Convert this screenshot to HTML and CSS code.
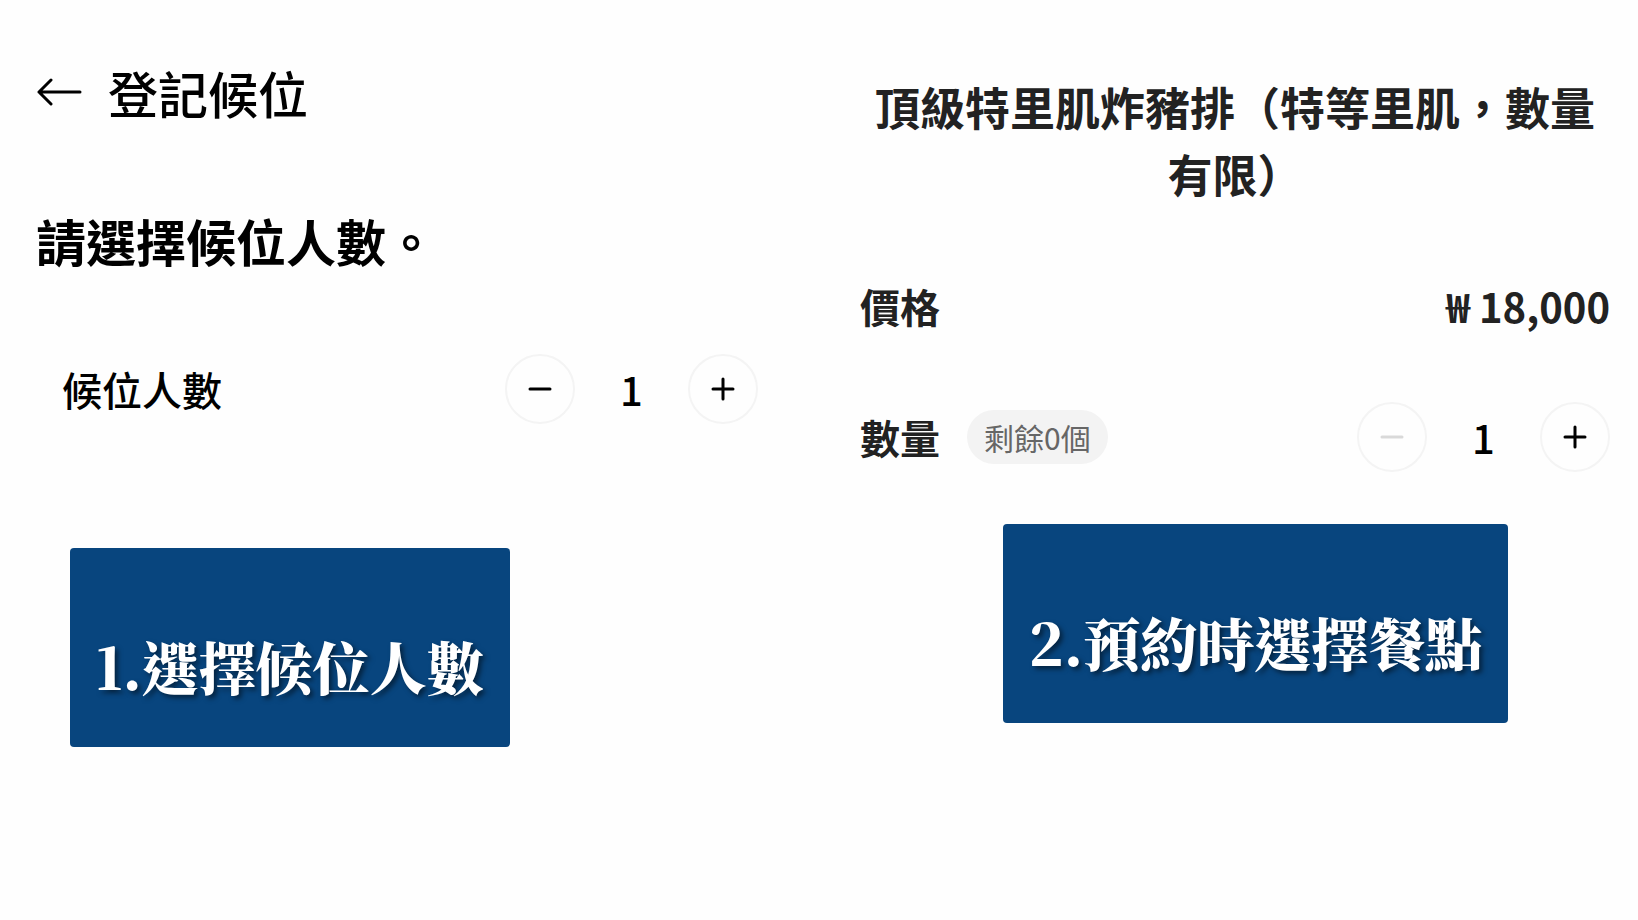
FILE: index.html
```
<!DOCTYPE html>
<html lang="zh-Hant">
<head>
    <meta charset="UTF-8">
    <meta name="viewport" content="width=device-width, initial-scale=1">
    <title>登記候位</title>
    <link rel="stylesheet" href="styles.css">
</head>
<body>
    <main class="page">
        <section class="panel waiting">
            <header class="topbar">
                <button type="button" class="back" aria-label="返回">
                    <svg width="46" height="28" viewBox="0 0 46 28"><path d="M15 2 3 14l12 12M3 14h41"/></svg>
                </button>
                <h1>登記候位</h1>
            </header>
            <h2 class="question">請選擇候位人數。</h2>
            <div class="row people">
                <span class="label" id="people">候位人數</span>
                <div class="stepper" role="group" aria-labelledby="people">
                    <button type="button" aria-label="減少">
                        <svg width="24" height="24" viewBox="0 0 24 24"><path d="M2 12h20"/></svg>
                    </button>
                    <output>1</output>
                    <button type="button" aria-label="增加">
                        <svg width="24" height="24" viewBox="0 0 24 24"><path d="M2 12h20M12 2v20"/></svg>
                    </button>
                </div>
            </div>
            <p class="caption">1.選擇候位人數</p>
        </section>
        <section class="panel menu">
            <h2 class="dish">頂級特里肌炸豬排（特等里肌，數量有限）</h2>
            <div class="row price">
                <span class="label">價格</span>
                <span class="amount">₩ 18,000</span>
            </div>
            <div class="row">
                <span class="label" id="qty">數量</span>
                <span class="left-count">剩餘0個</span>
                <div class="stepper" role="group" aria-labelledby="qty">
                    <button type="button" aria-label="減少" disabled>
                        <svg width="24" height="24" viewBox="0 0 24 24"><path d="M2 12h20"/></svg>
                    </button>
                    <output>1</output>
                    <button type="button" aria-label="增加">
                        <svg width="24" height="24" viewBox="0 0 24 24"><path d="M2 12h20M12 2v20"/></svg>
                    </button>
                </div>
            </div>
            <p class="caption">2.預約時選擇餐點</p>
        </section>
    </main>
</body>
</html>
```
FILE: styles.css
```
*{
    box-sizing:border-box;
}
body,h1,h2,p{
    margin:0;
}
body{
    font-family:"Noto Sans CJK TC",sans-serif;
    background-color:#fefefe;
    color:#000;
}
button{
    padding:0;
    border:none;
    background:none;
    color:inherit;
    cursor:pointer;
}
svg{
    display:block;
    fill:none;
    stroke:currentColor;
    stroke-width:3;
    stroke-linecap:round;
    stroke-linejoin:round;
}
.page{
    display:grid;
    grid-template-columns:1fr 1fr;
}
.panel{
    display:flex;
    flex-direction:column;
}
.waiting{
    padding:57px 61px 0 36px;
}
.menu{
    padding:73px 28px 0 41px;
    color:#222;
}
.topbar{
    display:flex;
    align-items:center;
    gap:26px;
}
.topbar h1{
    font-size:50px;
    line-height:70px;
    font-weight:500;
}
.question{
    margin-top:78px;
    font-size:50px;
    line-height:70px;
    font-weight:700;
}
.row{
    display:flex;
    align-items:center;
}
.people{
    margin-top:79px;
    padding-left:26px;
}
.label{
    font-size:40px;
    line-height:60px;
    font-weight:500;
}
.menu .label{
    font-weight:700;
}
.stepper{
    display:flex;
    align-items:center;
    margin-left:auto;
}
.stepper button{
    display:flex;
    align-items:center;
    justify-content:center;
    width:70px;
    height:70px;
    border:2px solid #f4f4f4;
    border-radius:50%;
    color:#000;
}
.stepper button:disabled{
    color:#d9d9d9;
    cursor:default;
}
.stepper output{
    width:113px;
    text-align:center;
    font-size:40px;
    line-height:60px;
    font-weight:500;
    color:#000;
}
.dish{
    font-size:45px;
    line-height:67px;
    font-weight:700;
    text-align:center;
}
.price{
    margin:69px 0 66px;
}
.amount{
    margin-left:auto;
    font-size:40px;
    line-height:60px;
    font-weight:700;
}
.left-count{
    margin-left:27px;
    padding:0 17px;
    border-radius:27px;
    background-color:#f3f3f3;
    color:#666;
    font-size:30px;
    line-height:54px;
}
/* 藍色說明牌 */
.caption{
    align-self:center;
    padding:74px 26px 39px;
    border-radius:4px;
    background-color:#08457e;
    color:#fff;
    font-family:"Noto Serif CJK TC","Liberation Serif","Noto Sans CJK TC",serif;
    font-size:57px;
    line-height:86px;
    font-weight:900;
    text-shadow:3px 3px 5px rgba(0,0,0,.5);
}
.waiting .caption{
    align-self:flex-start;
    margin:124px 0 0 34px;
}
.menu .caption{
    margin:52px 0 0 41px;
}
```
